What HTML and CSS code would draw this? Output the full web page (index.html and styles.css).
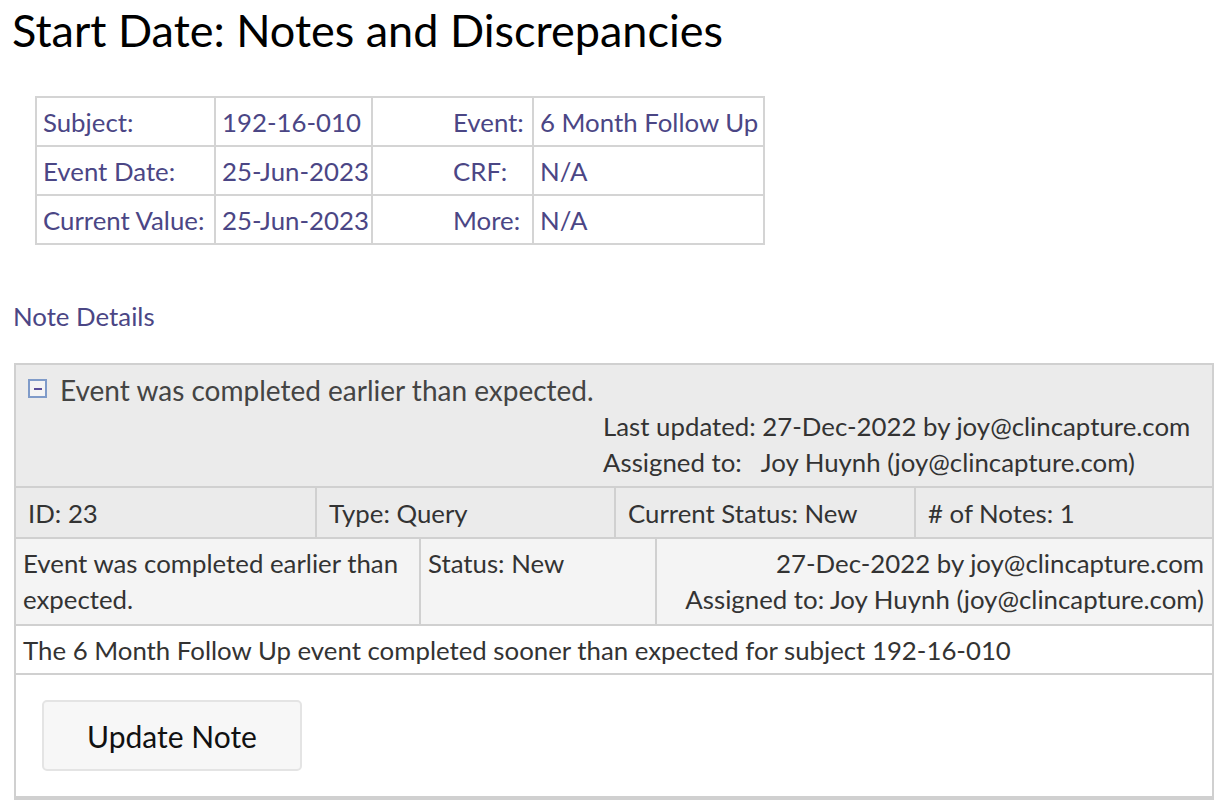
FILE: index.html
```html
<!DOCTYPE html>
<html>
<head>
<meta charset="utf-8">
<link rel="stylesheet" href="styles.css">
</head>
<body>
<h1 class="title">Start Date: Notes and Discrepancies</h1>
<table class="info">
  <colgroup><col class="c1"><col class="c2"><col class="c3"><col class="c4"></colgroup>
  <tr><td>Subject:</td><td>192-16-010</td><td class="lbl2">Event:</td><td>6 Month Follow Up</td></tr>
  <tr><td>Event Date:</td><td>25-Jun-2023</td><td class="lbl2">CRF:</td><td>N/A</td></tr>
  <tr><td>Current Value:</td><td>25-Jun-2023</td><td class="lbl2">More:</td><td>N/A</td></tr>
</table>
<h2 class="section">Note Details</h2>
<div class="note">
  <div class="note-head">
    <div class="head-title"><span class="toggle"><span class="dash"></span></span><span>Event was completed earlier than expected.</span></div>
    <div class="head-meta">
      <div>Last updated: 27-Dec-2022 by joy@clincapture.com</div>
      <div>Assigned to:&nbsp;&nbsp; Joy Huynh (joy@clincapture.com)</div>
    </div>
  </div>
  <div class="row row-summary">
    <div class="cell">ID: 23</div>
    <div class="cell">Type: Query</div>
    <div class="cell">Current Status: New</div>
    <div class="cell"># of Notes: 1</div>
  </div>
  <div class="row row-entry">
    <div class="cell">Event was completed earlier than expected.</div>
    <div class="cell">Status: New</div>
    <div class="cell right">27-Dec-2022 by joy@clincapture.com<br>Assigned to: Joy Huynh (joy@clincapture.com)</div>
  </div>
  <div class="row row-desc">
    <div class="cell">The 6 Month Follow Up event completed sooner than expected for subject 192-16-010</div>
  </div>
  <div class="row row-actions">
    <button class="btn">Update Note</button>
  </div>
</div>
</body>
</html>
```
FILE: styles.css
```css
html, body {
  margin: 0;
  padding: 0;
  background: #ffffff;
}
body {
  font-family: "Lato", "Open Sans", sans-serif;
  font-size: 25.8px;
  line-height: 36px;
  color: #333333;
  padding: 0 14px;
}
.title {
  font-size: 45px;
  font-weight: 400;
  line-height: 60px;
  margin: 0 0 36px -2px;
  color: #000;
}
.info {
  border-collapse: collapse;
  table-layout: fixed;
  width: 728px;
  margin-left: 21px;
  color: #4b4685;
}
.info col.c1 { width: 179px; }
.info col.c2 { width: 157px; }
.info col.c3 { width: 161px; }
.info col.c4 { width: 231px; }
.info td {
  border: 2px solid #d4d4d4;
  padding: 6px 6px 5px;
  height: 36px;
  white-space: nowrap;
}
.info td.lbl2 { padding-left: 80px; }
.section {
  font-size: 25.8px;
  font-weight: 400;
  color: #4b4685;
  margin: 53px 0 29px -1px;
  line-height: 36px;
}
.note {
  width: 1200px;
  box-sizing: border-box;
  border: 2px solid #d0d0d0;
  border-bottom-width: 4px;
}
.note-head {
  background: #ebebeb;
  padding: 7px 13px 6px 12px;
}
.head-title {
  display: flex;
  align-items: center;
  gap: 13px;
  font-size: 28px;
  color: #444;
}
.toggle {
  width: 15px;
  height: 15px;
  border: 2px solid #7f9bc9;
  background: #f4f4f4;
  display: flex;
  align-items: center;
  justify-content: center;
  flex: none;
  margin-top: -3px;
}
.dash {
  width: 8px;
  height: 2px;
  background: #5a4f9a;
}
.head-meta {
  margin-left: 575px;
  color: #333;
}
.row {
  display: grid;
  border-top: 2px solid #d0d0d0;
}
.row-summary {
  grid-template-columns: 299px 299px 300px 1fr;
  background: #ebebeb;
}
.row-entry {
  grid-template-columns: 403px 236px 1fr;
  background: #f4f4f4;
}
.row-desc { background: #fff; }
.cell {
  padding: 6px 8px 7px 7px;
  border-left: 2px solid #d0d0d0;
}
.cell:first-child { border-left: none; }
.row-summary .cell { padding: 7px 12px 6px; }
.row-desc .cell { padding: 6px 7px 5px; }
.right { text-align: right; }
.row-actions {
  display: block;
  padding: 25px 26px 25px;
  background: #fff;
}
.btn {
  font-family: inherit;
  font-size: 30px;
  color: #111;
  background: #f7f7f7;
  border: 2px solid #e4e4e4;
  border-radius: 5px;
  width: 260px;
  height: 71px;
  padding: 0;
  cursor: pointer;
}
```
